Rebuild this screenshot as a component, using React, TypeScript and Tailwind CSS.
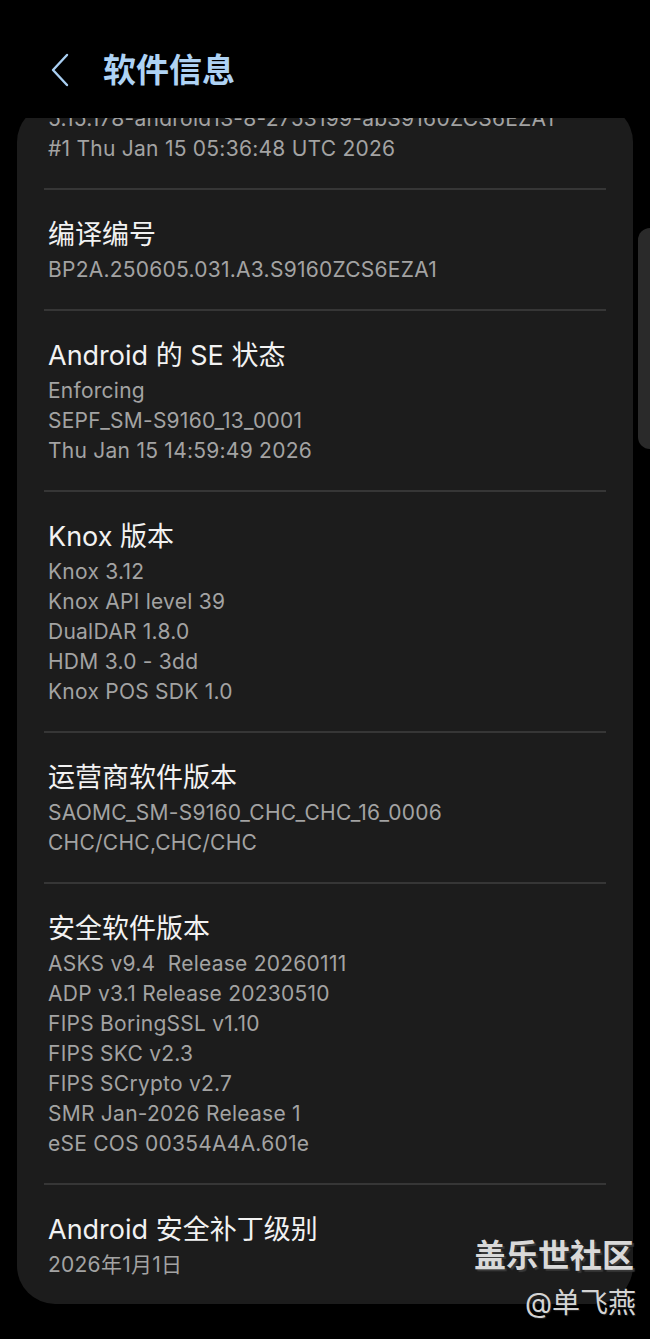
import React from "react";

const sections: { title: string; values: string[] }[] = [
  { title: "编译编号", values: ["BP2A.250605.031.A3.S9160ZCS6EZA1"] },
  {
    title: "Android 的 SE 状态",
    values: ["Enforcing", "SEPF_SM-S9160_13_0001", "Thu Jan 15 14:59:49 2026"],
  },
  {
    title: "Knox 版本",
    values: ["Knox 3.12", "Knox API level 39", "DualDAR 1.8.0", "HDM 3.0 - 3dd", "Knox POS SDK 1.0"],
  },
  {
    title: "运营商软件版本",
    values: ["SAOMC_SM-S9160_CHC_CHC_16_0006", "CHC/CHC,CHC/CHC"],
  },
  {
    title: "安全软件版本",
    values: [
      "ASKS v9.4\u00a0 Release 20260111",
      "ADP v3.1 Release 20230510",
      "FIPS BoringSSL v1.10",
      "FIPS SKC v2.3",
      "FIPS SCrypto v2.7",
      "SMR Jan-2026 Release 1",
      "eSE COS 00354A4A.601e",
    ],
  },
  { title: "Android 安全补丁级别", values: ["2026年1月1日"] },
];

const FONT = { fontFamily: 'Inter, "Noto Sans CJK SC", sans-serif' };

function Values({ values }: { values: string[] }) {
  return (
    <div className="flex flex-col">
      {values.map((v) => (
        <div key={v} className="text-[21px] leading-[30px] tracking-[0.25px] text-[#a3a3a3] whitespace-pre">
          {v}
        </div>
      ))}
    </div>
  );
}

export default function App() {
  return (
    <div className="relative w-[650px] h-[1339px] bg-black overflow-hidden" style={FONT}>
      {/* Header */}
      <div className="flex items-center h-[60px] mt-[40px] pl-[50px]">
        <svg width="20" height="34" viewBox="0 0 20 34" className="shrink-0">
          <path d="M17 2 L3 17 L17 32" fill="none" stroke="#a9cff2" strokeWidth="2.4" strokeLinecap="round" strokeLinejoin="round" />
        </svg>
        <div className="ml-[33px] text-[33px] font-bold text-[#aed2f4] leading-none">软件信息</div>
      </div>

      {/* Scroll area */}
      <div className="mt-[18px] h-[1221px] overflow-hidden">
        <div className="mt-[5px] mx-[17px] bg-[#1c1c1c] rounded-[38px] pb-[24px]">
          <div className="px-[31px] -mt-[19px] pb-[24px]">
            <Values values={["5.15.178-android13-8-2753199-abS9160ZCS6EZA1", "#1 Thu Jan 15 05:36:48 UTC 2026"]} />
          </div>
          {sections.map((s, i) => (
            <div key={s.title}>
              <div className="mx-[27px] h-[2px] bg-[#363636]" />
              <div className={"px-[31px] pt-[27px]" + (i < sections.length - 1 ? " pb-[24px]" : "")}>
                <div className="text-[27px] leading-[36px] text-[#f2f2f2]">{s.title}</div>
                <div className="mt-[2px]">
                  <Values values={s.values} />
                </div>
              </div>
            </div>
          ))}
        </div>
      </div>

      {/* Scrollbar */}
      <div className="absolute left-[638px] top-[228px] w-[24px] h-[221px] rounded-[12px] bg-[#2a2a2a]" />

      {/* Watermark */}
      <div className="absolute right-[16px] top-[1236px] flex flex-col items-end">
        <div
          className="text-[32px] font-bold leading-[40px] text-[#d9d9d9]"
          style={{ textShadow: "2px 2px 1px #3a3a3a" }}
        >
          盖乐世社区
        </div>
        <div
          className="text-[28px] leading-[34px] mt-[10px] -mr-[2px] text-[#d4d4d4]"
          style={{ textShadow: "1px 1px 1px #222" }}
        >
          @单飞燕
        </div>
      </div>
    </div>
  );
}
